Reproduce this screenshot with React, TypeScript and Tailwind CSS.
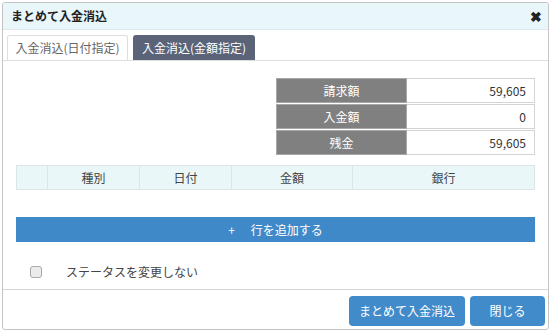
import React from 'react';

const font = { fontFamily: '"Noto Sans CJK JP", "Noto Sans", sans-serif' };

const summary = [
  { label: '請求額', value: '59,605' },
  { label: '入金額', value: '0' },
  { label: '残金', value: '59,605' },
];

const columns = [
  { name: '', w: 'w-[30px]' },
  { name: '種別', w: 'w-[92px]' },
  { name: '日付', w: 'w-[92px]' },
  { name: '金額', w: 'w-[121px]' },
  { name: '銀行', w: 'flex-1' },
];

const App: React.FC = () => {
  return (
    <div className="w-[551px] h-[333px] bg-white p-[2px] text-[#333]" style={font}>
      <div className="w-[547px] h-[328px] border border-[#c4c4c4] rounded-[3px] flex flex-col overflow-hidden">
        {/* header */}
        <div className="h-[27px] shrink-0 bg-[#e9f7fa] border-b border-[#dde9ec] flex items-center justify-between pl-[8px] pr-[6px]">
          <span className="text-[12px] font-bold text-[#222]">まとめて入金消込</span>
          <span className="text-[14px] font-bold leading-none text-[#222]">✖</span>
        </div>

        {/* tabs */}
        <div className="mt-[5px] h-[26px] shrink-0 flex items-end gap-[5px] px-[4px] border-b border-[#dedede]">
          <div className="h-[25px] w-[121px] border border-b-0 border-[#dedede] rounded-t-[3px] bg-white flex items-center justify-center text-[12px] text-[#666]">
            入金消込(日付指定)
          </div>
          <div className="h-[25px] w-[122px] rounded-t-[3px] bg-[#5a6378] flex items-center justify-center text-[12px] text-white">
            入金消込(金額指定)
          </div>
        </div>

        {/* body */}
        <div className="flex-1 px-[13px] flex flex-col">
          <div className="mt-[17px] self-end w-[259px] flex flex-col gap-[1px]">
            {summary.map((row) => (
              <div key={row.label} className="flex h-[25px]">
                <div className="w-[131px] bg-[#808080] border border-[#a8a8a8] flex items-center justify-center text-[12px] text-white">
                  {row.label}
                </div>
                <div className="flex-1 border border-l-0 border-[#d4d4d4] flex items-center justify-end pr-[8px] text-[12px] text-[#333]">
                  {row.value}
                </div>
              </div>
            ))}
          </div>

          <div className="mt-[10px] h-[25px] flex bg-[#e9f7f9] border border-[#dbe5e7]">
            {columns.map((c, i) => (
              <div
                key={i}
                className={`${c.w} ${i > 0 ? 'border-l border-[#dbe5e7]' : ''} flex items-center justify-center text-[12px] text-[#444]`}
              >
                {c.name}
              </div>
            ))}
          </div>

          <div className="mt-[27px] h-[25px] bg-[#3f89c9] flex items-center justify-center text-[12px] text-white">
            <span className="mr-[16px]">+</span>
            <span>行を追加する</span>
          </div>

          <div className="mt-[21px] flex items-center">
            <span className="ml-[14px] w-[12px] h-[12px] rounded-[3px] border border-[#a9a9a9] bg-[#ececec]" />
            <span className="ml-[24px] text-[12px] text-[#444]">ステータスを変更しない</span>
          </div>
        </div>

        {/* footer */}
        <div className="h-[40px] shrink-0 border-t border-[#d6d6d6] flex items-start justify-end gap-[5px] pt-[6px] pr-[3px]">
          <button className="w-[116px] h-[30px] rounded-[4px] bg-[#428bca] text-white text-[12px]">
            まとめて入金消込
          </button>
          <button className="w-[75px] h-[30px] rounded-[4px] bg-[#428bca] text-white text-[12px]">
            閉じる
          </button>
        </div>
      </div>
    </div>
  );
};

export default App;
